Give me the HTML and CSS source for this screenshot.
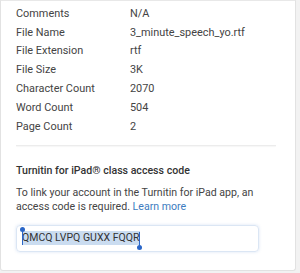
FILE: index.html
```html
<!DOCTYPE html>
<html lang="en">
<head>
    <meta charset="UTF-8">
    <meta name="viewport" content="width=device-width, initial-scale=1.0">
    <title>Document details</title>
    <link rel="stylesheet" href="styles.css">
</head>
<body>

    <div class="panel">
        <div class="details">
            <div class="row"><span class="label">Comments</span><span class="value">N/A</span></div>
            <div class="row"><span class="label">File Name</span><span class="value">3_minute_speech_yo.rtf</span></div>
            <div class="row"><span class="label">File Extension</span><span class="value">rtf</span></div>
            <div class="row"><span class="label">File Size</span><span class="value">3K</span></div>
            <div class="row"><span class="label">Character Count</span><span class="value">2070</span></div>
            <div class="row"><span class="label">Word Count</span><span class="value">504</span></div>
            <div class="row"><span class="label">Page Count</span><span class="value">2</span></div>
        </div>

        <hr class="divider">

        <h2 class="code-title">Turnitin for iPad® class access code</h2>
        <p class="code-text">To link your account in the Turnitin for iPad app, an access code is required. <a href="#" class="learn">Learn more</a></p>

        <div class="code-box">
            <span class="selection">
                <span class="handle start"></span>QMCQ LVPQ GUXX FQQR<span class="handle end"></span>
            </span>
        </div>
    </div>

    <div class="scroll"></div>

</body>
</html>
```

FILE: styles.css
```css
body {
    margin: 0;
    background: #f2f2f2;
    font-family: Roboto, "Noto Sans", sans-serif;
    color: #444;
    display: flex;
    height: 273px;
    overflow: hidden;
}

.panel {
    width: 296px;
    height: 271px;
    background: #fff;
    border: 1px solid #e2e2e2;
    border-top-color: #e8e8e8;
    border-radius: 0 0 3px 3px;
    padding: 0 14px 0 15px;
    box-sizing: border-box;
}

.details {
    padding-top: 3px;
}

.row {
    display: flex;
    height: 18.8px;
    align-items: center;
    font-size: 10.9px;
}

.label {
    width: 114px;
}

.divider {
    border: none;
    border-top: 1px solid #ececec;
    box-shadow: 0 1px 1px rgba(0, 0, 0, 0.04);
    margin: 9px 5px 0 0;
}

.code-title {
    font-size: 10.6px;
    font-weight: 500;
    color: #333;
    margin: 17px 0 0;
    line-height: 16px;
}

.code-text {
    font-size: 10.6px;
    line-height: 14px;
    margin: 7px 0 0;
    color: #444;
    padding-right: 14px;
}

.learn {
    color: #3d7cc0;
    text-decoration: none;
}

.code-box {
    width: 243px;
    height: 27px;
    margin-top: 11px;
    border: 1px solid #dbe6f4;
    border-radius: 4px;
    box-shadow: 0 0 3px rgba(90, 140, 210, 0.25);
    box-sizing: border-box;
    display: flex;
    align-items: center;
    padding-left: 5px;
}

.selection {
    position: relative;
    background: #cadcf0;
    font-size: 10.5px;
    line-height: 14px;
    color: #333;
    padding-right: 1px;
}

.handle {
    position: absolute;
    width: 1px;
    height: 16px;
    background: #2a66c8;
}

.handle::after {
    content: "";
    position: absolute;
    left: -2px;
    width: 5px;
    height: 5px;
    border-radius: 50%;
    background: #2a66c8;
}

.handle.start {
    left: 0;
    top: -2px;
}

.handle.start::after {
    top: -2px;
}

.handle.end {
    right: 0;
    top: 1px;
}

.handle.end::after {
    bottom: -2px;
}

.scroll {
    width: 1px;
    height: 273px;
    margin-left: 2px;
}
```
